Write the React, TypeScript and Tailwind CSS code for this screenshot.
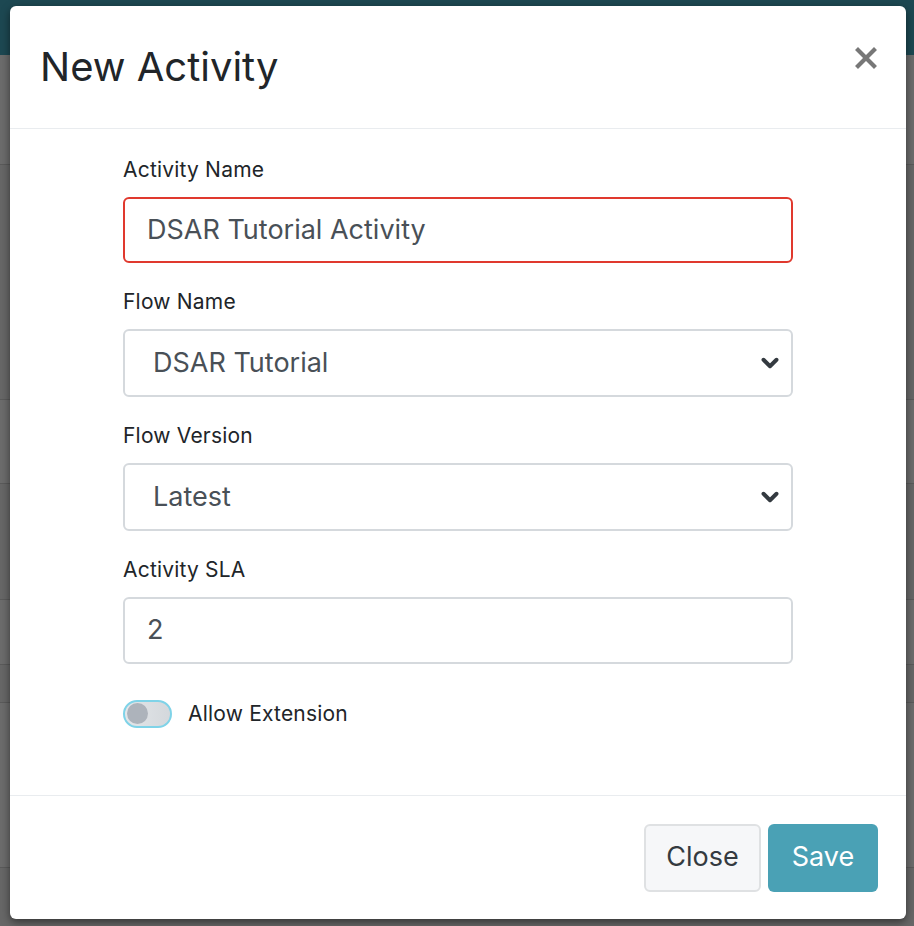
import { ChevronDown } from "lucide-react";

const Field = ({ label, children }: { label: string; children: React.ReactNode }) => (
  <div className="mb-[27px]">
    <label className="mb-[15px] block text-[21px] leading-[24px] tracking-[0.2px] text-[#212529]">{label}</label>
    {children}
  </div>
);

const SelectBox = ({ value }: { value: string }) => (
  <div className="flex h-[68px] items-center justify-between rounded-[6px] border-2 border-[#d5d9dd] bg-white pl-[28px] pr-[8px] text-[27px] text-[#495057]">
    <span>{value}</span>
    <ChevronDown className="h-[26px] w-[26px] text-[#343a40]" strokeWidth={3.6} />
  </div>
);

export default function App() {
  const rows = [110, 235, 84, 116, 65, 38, 165, 120];

  return (
    <div className="relative h-[926px] w-full overflow-hidden bg-[#6a6a6a] font-['Inter','Roboto',sans-serif]">
      {/* dimmed page behind the modal */}
      <div className="h-[55px] bg-[#1d4852]" />
      <div className="flex flex-col">
        {rows.map((h, i) => (
          <div
            key={i}
            style={{ height: h }}
            className={`border-b border-[#5a5a5a] ${i % 2 ? "bg-[#676767]" : "bg-[#6c6c6c]"}`}
          />
        ))}
      </div>

      {/* modal */}
      <div className="absolute inset-0 pb-[7px] pl-[10px] pr-[8px] pt-[6px]">
        <div className="flex h-full flex-col rounded-[6px] bg-white shadow-[0_3px_8px_rgba(0,0,0,0.5)]">
          <div className="flex h-[123px] shrink-0 items-center justify-between border-b border-[#e9ecef] pl-[30px] pr-[29px]">
            <h2 className="text-[40px] leading-none text-[#212529]">New Activity</h2>
            <svg width="22" height="22" viewBox="0 0 22 22" className="mt-[-18px]">
              <path d="M3 3 L19 19 M19 3 L3 19" stroke="#777" strokeWidth="4.2" strokeLinecap="square" />
            </svg>
          </div>

          <div className="flex flex-1 justify-center border-b border-[#e9ecef] pt-[29px]">
            <div className="w-[670px]">
              <Field label="Activity Name">
                <div className="flex h-[66px] items-center rounded-[6px] border-2 border-[#e0392e] bg-white pl-[22px] text-[27px] text-[#495057]">
                  DSAR Tutorial Activity
                </div>
              </Field>
              <Field label="Flow Name">
                <SelectBox value="DSAR Tutorial" />
              </Field>
              <Field label="Flow Version">
                <SelectBox value="Latest" />
              </Field>
              <Field label="Activity SLA">
                <div className="flex h-[67px] items-center rounded-[6px] border-2 border-[#d5d9dd] bg-white pl-[22px] text-[27px] text-[#495057]">
                  2
                </div>
              </Field>
              <div className="mt-[34px] flex items-center gap-[16px]">
                <div className="flex h-[28px] w-[49px] items-center rounded-full border-2 border-[#7fd3e8] bg-gradient-to-r from-[#e3e6e9] to-[#d4d8dc] px-[2px]">
                  <div className="h-[21px] w-[21px] rounded-full bg-[#adb3bb]" />
                </div>
                <span className="text-[21px] tracking-[0.2px] text-[#212529]">Allow Extension</span>
              </div>
            </div>
          </div>

          <div className="flex h-[123px] shrink-0 items-center justify-end gap-[7px] pr-[28px]">
            <button className="h-[68px] w-[117px] rounded-[6px] border-2 border-[#dfe1e3] bg-[#f6f7f9] text-[27px] text-[#343a40]">
              Close
            </button>
            <button className="h-[68px] w-[110px] rounded-[6px] bg-[#4aa1b5] text-[27px] text-white">
              Save
            </button>
          </div>
        </div>
      </div>
    </div>
  );
}
